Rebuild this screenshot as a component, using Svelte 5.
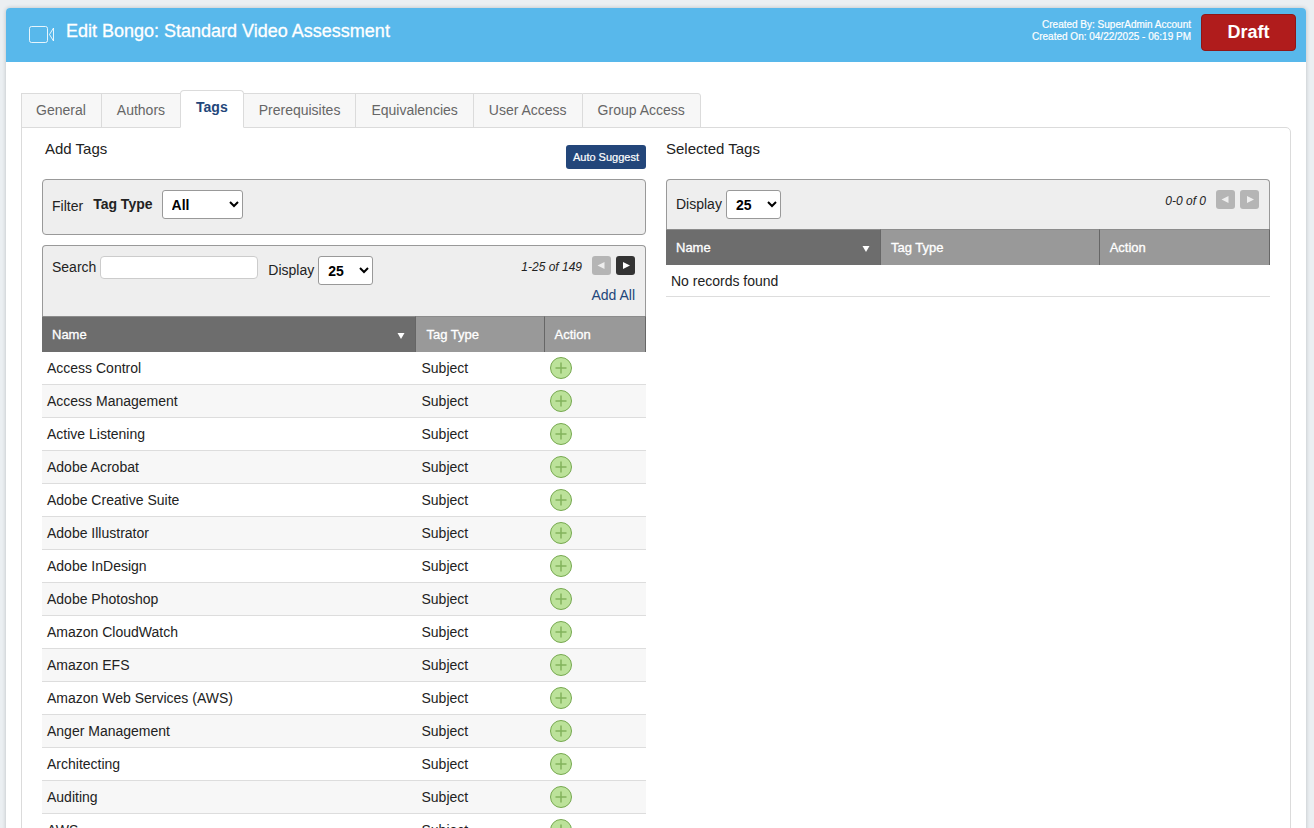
<script lang="ts">
const tabs = ['General', 'Authors', 'Tags', 'Prerequisites', 'Equivalencies', 'User Access', 'Group Access'];
const tags = [
    'Access Control',
    'Access Management',
    'Active Listening',
    'Adobe Acrobat',
    'Adobe Creative Suite',
    'Adobe Illustrator',
    'Adobe InDesign',
    'Adobe Photoshop',
    'Amazon CloudWatch',
    'Amazon EFS',
    'Amazon Web Services (AWS)',
    'Anger Management',
    'Architecting',
    'Auditing',
    'AWS',
].map(name => ({ name, type: 'Subject' }));

let activeTab = $state('Tags');
let search = $state('');
let shown = $derived(tags.filter(tag => tag.name.toLowerCase().includes(search.toLowerCase())));
</script>

{#snippet pager(label: string, hasNext: boolean)}
    <div class="pager">
        <em>{label}</em>
        <button aria-label="Previous page" disabled>
            <svg width="19" height="19" viewBox="0 0 19 19"><path d="M12.5 6v7L5.5 9.5z" fill="currentColor" /></svg>
        </button>
        <button aria-label="Next page" disabled={!hasNext}>
            <svg width="19" height="19" viewBox="0 0 19 19"><path d="M7 6v7l7-3.5z" fill="currentColor" /></svg>
        </button>
    </div>
{/snippet}

{#snippet tableHead()}
    <thead>
        <tr>
            <th class="sorted">
                <div>
                    Name
                    <svg width="8" height="9" viewBox="0 0 8 9"><path d="M0.5 3h7L4 9z" fill="currentColor" /></svg>
                </div>
            </th>
            <th>Tag Type</th>
            <th>Action</th>
        </tr>
    </thead>
{/snippet}

{#snippet arrow()}
    <svg class="arrow" width="10" height="7" viewBox="0 0 10 7"><path d="M1 1l4 4 4-4" fill="none" stroke="currentColor" stroke-width="2" /></svg>
{/snippet}

<main>
    <header>
        <svg width="27" height="18" viewBox="0 0 27 18" fill="none" stroke="currentColor">
            <rect x="0.5" y="0.5" width="18" height="16" rx="2" stroke-opacity="0.85" />
            <path d="M24.5 2v13M24.5 2l-4 6.5 4 6.5" stroke-opacity="0.85" />
        </svg>
        <h1>Edit Bongo: Standard Video Assessment</h1>
        <p>
            Created By: SuperAdmin Account<br>
            Created On: 04/22/2025 - 06:19 PM
        </p>
        <button class="draft">Draft</button>
    </header>

    <div class="content">
        <nav>
            {#each tabs as tab}
                <button class="tab" class:active={tab === activeTab} onclick={() => activeTab = tab}>{tab}</button>
            {/each}
        </nav>
        <div class="panel">
            <section>
                <div class="section-head">
                    <h2>Add Tags</h2>
                    <button class="suggest">Auto Suggest</button>
                </div>
                <div class="filter">
                    <span>Filter</span>
                    <label for="tag-type"><b>Tag Type</b></label>
                    <div class="select wide">
                        <select id="tag-type"><option>All</option><option>Subject</option></select>
                        {@render arrow()}
                    </div>
                </div>
                <div class="toolbar">
                    <label for="search">Search</label>
                    <input id="search" type="text" bind:value={search}>
                    <label class="display" for="display">Display</label>
                    <div class="select">
                        <select id="display"><option>25</option><option>50</option></select>
                        {@render arrow()}
                    </div>
                    <div class="toolbar-end">
                        {@render pager('1-25 of 149', true)}
                        <a href="#add-all">Add All</a>
                    </div>
                </div>
                <table class="available">
                    {@render tableHead()}
                    <tbody>
                        {#each shown as tag}
                            <tr>
                                <td>{tag.name}</td>
                                <td>{tag.type}</td>
                                <td>
                                    <button class="add" aria-label="Add {tag.name}">
                                        <svg width="22" height="22" viewBox="0 0 22 22">
                                            <circle cx="11" cy="11" r="10.5" fill="#bce29a" stroke="#76a84f" />
                                            <path d="M11 5.5v11M5.5 11h11" stroke="#82b35c" stroke-width="1.5" />
                                        </svg>
                                    </button>
                                </td>
                            </tr>
                        {/each}
                    </tbody>
                </table>
            </section>

            <section>
                <div class="section-head">
                    <h2>Selected Tags</h2>
                </div>
                <div class="toolbar short">
                    <label for="display-selected">Display</label>
                    <div class="select">
                        <select id="display-selected"><option>25</option><option>50</option></select>
                        {@render arrow()}
                    </div>
                    <div class="toolbar-end">
                        {@render pager('0-0 of 0', false)}
                    </div>
                </div>
                <table class="selected">
                    {@render tableHead()}
                    <tbody>
                        <tr><td colspan="3">No records found</td></tr>
                    </tbody>
                </table>
            </section>
        </div>
    </div>
</main>

<style>
:global(body) {
    background: #ebeff2;
    color: #222;
    font: 14px/20px "Liberation Sans", Arial, sans-serif;
}
* {
    box-sizing: border-box;
}
button, input, select {
    font-family: inherit;
}
svg {
    display: block;
}
main {
    margin: 8px 8px 0 6px;
    background: #fff;
    border-radius: 4px 4px 0 0;
    box-shadow: 0 0 4px #0003;
}
header {
    display: flex;
    align-items: flex-start;
    height: 54px;
    padding: 6px 10px 0 23px;
    background: #58b8eb;
    color: #fff;
    border-radius: 4px 4px 0 0;
}
header svg {
    margin-top: 12px;
}
h1 {
    flex: 1;
    margin: 6px 0 0 10px;
    font-size: 18px;
    font-weight: 400;
    line-height: 22px;
    -webkit-text-stroke: 0.3px;
}
header p {
    margin: 5px 10px 0 0;
    font-size: 10px;
    line-height: 12px;
    text-align: right;
    -webkit-text-stroke: 0.2px;
}
.draft {
    width: 95px;
    height: 37px;
    background: #b01c1c;
    border: 1px solid #8f1717;
    border-radius: 4px;
    color: #fff;
    font-size: 18px;
    font-weight: 700;
}
.content {
    padding: 28px 15px 20px;
}
nav {
    display: flex;
    align-items: flex-end;
    margin-bottom: -1px;
}
.tab {
    height: 35px;
    padding: 0 15px 2px;
    background: #f7f7f7;
    border: 1px solid #dbdbdb;
    border-right: none;
    color: #666;
    font-size: 14px;
}
.tab:first-child {
    padding-left: 14px;
}
.tab:last-child {
    border-right: 1px solid #dbdbdb;
    border-radius: 0 3px 0 0;
}
.tab.active {
    position: relative;
    height: 38px;
    padding-bottom: 4px;
    background: #fff;
    border-right: 1px solid #dbdbdb;
    border-bottom-color: #fff;
    border-radius: 4px 4px 0 0;
    color: #23467a;
    font-weight: 700;
}
.tab.active + .tab {
    border-left: none;
}
.panel {
    display: grid;
    grid-template-columns: 1fr 1fr;
    gap: 20px;
    align-items: start;
    padding: 0 20px 20px;
    border: 1px solid #dbdbdb;
    border-radius: 0 5px 5px 5px;
}
.section-head {
    display: flex;
    justify-content: space-between;
    height: 51px;
}
h2 {
    margin: 11px 0 0;
    font-size: 15px;
    font-weight: 400;
    line-height: 20px;
}
section:first-child h2 {
    margin-left: 3px;
}
.suggest {
    height: 24px;
    margin-top: 17px;
    padding: 0 7px;
    background: #23467a;
    border: none;
    border-radius: 3px;
    color: #fff;
    font-size: 11px;
    -webkit-text-stroke: 0.2px;
}
.filter, .toolbar {
    display: flex;
    align-items: flex-start;
    padding: 10px 10px 0 9px;
    background: #eee;
    border: 1px solid #999;
    border-radius: 4px;
}
.filter {
    height: 56px;
    margin-bottom: 10px;
}
.filter label {
    margin: 4px 9px 0 10px;
}
.filter > span {
    margin-top: 6px;
}
.toolbar {
    height: 71px;
    border-bottom: none;
    border-radius: 4px 4px 0 0;
}
.toolbar.short {
    height: 50px;
}
.toolbar label {
    margin: 1px 4px 0 0;
}
.toolbar .display, .toolbar.short label {
    margin-top: 4px;
}
input {
    width: 158px;
    height: 23px;
    margin-right: 10px;
    padding: 0 6px;
    background: #fff;
    border: 1px solid #ccc;
    border-radius: 4px;
}
.select {
    position: relative;
    width: 55px;
    height: 29px;
}
.select.wide {
    width: 81px;
}
select {
    appearance: none;
    width: 100%;
    height: 100%;
    padding: 0 9px;
    background: #fff;
    border: 1px solid #999;
    border-radius: 3px;
    color: #000;
    font-size: 14px;
    font-weight: 700;
}
.arrow {
    position: absolute;
    top: 11px;
    right: 4px;
    color: #000;
    pointer-events: none;
}
.toolbar-end {
    margin-left: auto;
    text-align: right;
}
.pager {
    display: flex;
    gap: 5px;
}
.pager em {
    margin: 1px 5px 0 0;
    font-size: 12px;
}
.pager button {
    width: 19px;
    height: 19px;
    padding: 0;
    background: #333;
    border: none;
    border-radius: 3px;
    color: #fff;
}
.pager button:disabled {
    background: #b5b5b5;
    color: #eee;
}
a {
    display: inline-block;
    margin-top: 8px;
    color: #23467a;
    text-decoration: none;
}
table {
    table-layout: fixed;
    width: 100%;
    border-spacing: 0;
}
th {
    height: 36px;
    padding: 0 10px;
    background: #999;
    border-top: 1px solid #8c8c8c;
    border-right: 1px solid #666;
    color: #fff;
    font-size: 13px;
    font-weight: 400;
    text-align: left;
    -webkit-text-stroke: 0.3px;
}
.sorted {
    background: #6d6d6d;
}
th div {
    display: flex;
    align-items: center;
    justify-content: space-between;
}
.available th:first-child {
    width: 62%;
}
.available th:nth-child(2) {
    width: 21.2%;
}
.selected th:first-child {
    width: 35.6%;
}
.selected th:nth-child(2) {
    width: 36.2%;
}
td {
    height: 33px;
    padding: 0 5px;
    border-bottom: 1px solid #ddd;
}
.selected td {
    height: 32px;
}
.available tbody tr:nth-child(even) {
    background: #f7f7f7;
}
.add {
    display: block;
    padding: 0;
    background: none;
    border: none;
}
</style>
